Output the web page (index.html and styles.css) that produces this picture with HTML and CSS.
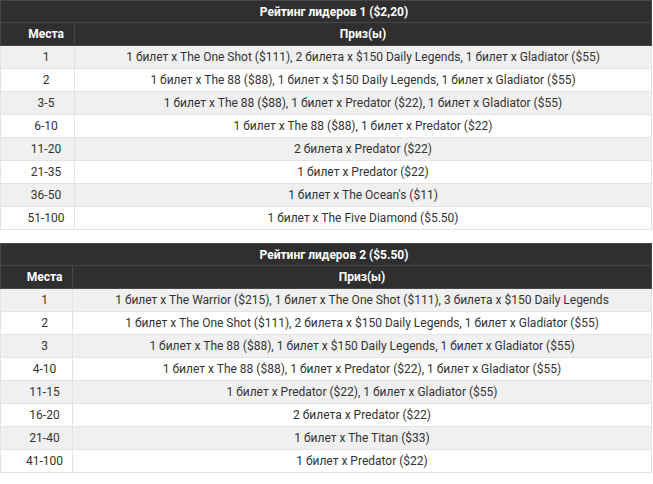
FILE: index.html
```html
<!DOCTYPE html>
<html lang="ru">
<head>
<meta charset="utf-8">
<link rel="stylesheet" href="styles.css">
</head>
<body>
<table class="board board-1">
  <colgroup><col class="col-place"><col class="col-prize"></colgroup>
  <thead>
    <tr><th class="title" colspan="2">Рейтинг лидеров 1 ($2,20)</th></tr>
    <tr><th class="place">Места</th><th class="prize">Приз(ы)</th></tr>
  </thead>
  <tbody>
    <tr><td class="place">1</td><td class="prize">1 билет x The One Shot ($111), 2 билета x $150 Daily Legends, 1 билет x Gladiator ($55)</td></tr>
    <tr><td class="place">2</td><td class="prize">1 билет x The 88 ($88), 1 билет x $150 Daily Legends, 1 билет x Gladiator ($55)</td></tr>
    <tr><td class="place">3-5</td><td class="prize">1 билет x The 88 ($88), 1 билет x Predator ($22), 1 билет x Gladiator ($55)</td></tr>
    <tr><td class="place">6-10</td><td class="prize">1 билет x The 88 ($88), 1 билет x Predator ($22)</td></tr>
    <tr><td class="place">11-20</td><td class="prize">2 билета x Predator ($22)</td></tr>
    <tr><td class="place">21-35</td><td class="prize">1 билет x Predator ($22)</td></tr>
    <tr><td class="place">36-50</td><td class="prize">1 билет x The Ocean's ($11)</td></tr>
    <tr><td class="place">51-100</td><td class="prize">1 билет x The Five Diamond ($5.50)</td></tr>
  </tbody>
</table>
<table class="board board-2">
  <colgroup><col class="col-place"><col class="col-prize"></colgroup>
  <thead>
    <tr><th class="title" colspan="2">Рейтинг лидеров 2 ($5.50)</th></tr>
    <tr><th class="place">Места</th><th class="prize">Приз(ы)</th></tr>
  </thead>
  <tbody>
    <tr><td class="place">1</td><td class="prize">1 билет x The Warrior ($215), 1 билет x The One Shot ($111), 3 билета x $150 Daily Legends</td></tr>
    <tr><td class="place">2</td><td class="prize">1 билет x The One Shot ($111), 2 билета x $150 Daily Legends, 1 билет x Gladiator ($55)</td></tr>
    <tr><td class="place">3</td><td class="prize">1 билет x The 88 ($88), 1 билет x $150 Daily Legends, 1 билет x Gladiator ($55)</td></tr>
    <tr><td class="place">4-10</td><td class="prize">1 билет x The 88 ($88), 1 билет x Predator ($22), 1 билет x Gladiator ($55)</td></tr>
    <tr><td class="place">11-15</td><td class="prize">1 билет x Predator ($22), 1 билет x Gladiator ($55)</td></tr>
    <tr><td class="place">16-20</td><td class="prize">2 билета x Predator ($22)</td></tr>
    <tr><td class="place">21-40</td><td class="prize">1 билет x The Titan ($33)</td></tr>
    <tr><td class="place">41-100</td><td class="prize">1 билет x Predator ($22)</td></tr>
  </tbody>
</table>
</body>
</html>
```

FILE: styles.css
```css
html, body {
  margin: 0;
  padding: 0;
  background: #ffffff;
}

body {
  font-family: Roboto, "Liberation Sans", Arial, sans-serif;
  font-size: 12px;
  color: #333333;
}

.board {
  width: 652px;
  border-collapse: collapse;
  table-layout: fixed;
}

.board-1 {
  margin-bottom: 13px;
}

.board-1 .col-place {
  width: 74px;
}

.board-2 .col-place {
  width: 72px;
}

.board th,
.board td {
  border: 1px solid #e3e3e3;
  height: 22px;
  padding: 0;
  line-height: 14px;
  text-align: center;
  vertical-align: middle;
  white-space: nowrap;
}

.board th {
  background: #2f2f2f;
  color: #ffffff;
  font-weight: 700;
  border-color: #464646;
}

.board th.title {
  height: 21px;
  padding-left: 16px;
}

.board .place {
  padding-left: 17px;
  padding-right: 0;
}

.board-2 .place {
  padding-left: 16px;
}

.board tbody tr:nth-child(odd) td {
  background: #f0f0f0;
}

.board tbody tr:nth-child(even) td {
  background: #ffffff;
}
```
